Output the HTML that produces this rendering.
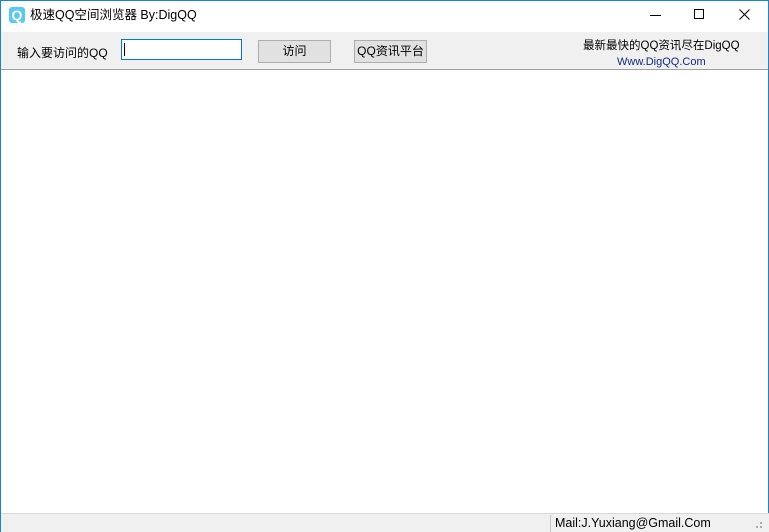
<!DOCTYPE html>
<html><head><meta charset="utf-8"><style>
*{margin:0;padding:0;box-sizing:border-box}
body{width:769px;height:532px;overflow:hidden;background:#fff;font-family:"Liberation Sans","Noto Sans CJK SC",sans-serif;font-size:12px;color:#000;position:relative}
.frame{position:absolute;left:0;top:0;width:769px;height:532px;border:1px solid #1883d7;border-bottom:none}
.abs{position:absolute;white-space:nowrap}
</style></head><body>
<div class="frame"></div>
<div class="abs" style="left:9px;top:7px;width:16px;height:16px;background:#5ac8f5;border-radius:3px;color:#fff;font-weight:bold;font-size:14px;line-height:16px;text-align:center">Q</div>
<div class="abs" style="left:30px;top:7px;font-size:12.5px;line-height:16px">极速QQ空间浏览器 By:DigQQ</div>
<div class="abs" style="left:650px;top:15px;width:11px;height:1px;background:#000"></div>
<div class="abs" style="left:694px;top:9px;width:10px;height:10px;border:1px solid #000"></div>
<svg class="abs" style="left:739px;top:9px" width="11" height="11"><path d="M0.5 0.5L10.5 10.5M10.5 0.5L0.5 10.5" stroke="#000" stroke-width="1"/></svg>
<div class="abs" style="left:1px;top:32px;width:767px;height:38px;background:#f0f0f0;border-bottom:1px solid #a0a0a0"></div>
<div class="abs" style="left:17px;top:46px;line-height:14px">输入要访问的QQ</div>
<div class="abs" style="left:121px;top:39px;width:121px;height:21px;background:#fff;border:1px solid #0078d7"></div>
<div class="abs" style="left:124px;top:43px;width:1px;height:13px;background:#000"></div>
<div class="abs" style="left:258px;top:40px;width:73px;height:23px;background:#e1e1e1;border:1px solid #adadad;text-align:center;line-height:21px">访问</div>
<div class="abs" style="left:354px;top:40px;width:73px;height:23px;background:#e1e1e1;border:1px solid #adadad;text-align:center;line-height:21px">QQ资讯平台</div>
<div class="abs" style="left:583px;top:39px;line-height:14px;font-size:11.5px">最新最快的QQ资讯尽在DigQQ</div>
<div class="abs" style="left:617px;top:55px;line-height:14px;font-size:11px;color:#102a80">Www.DigQQ.Com</div>
<div class="abs" style="left:1px;top:513px;width:768px;height:19px;background:#f0f0f0;border-top:1px solid #d7d7d7"></div>
<div class="abs" style="left:550px;top:515px;width:1px;height:17px;background:#c8c8c8"></div>
<div class="abs" style="left:555px;top:515px;font-size:12.5px;line-height:16px">Mail:J.Yuxiang@Gmail.Com</div>
<div class="abs" style="left:756px;top:526px;width:2px;height:2px;background:#aaa"></div>
<div class="abs" style="left:760px;top:526px;width:2px;height:2px;background:#aaa"></div>
<div class="abs" style="left:760px;top:522px;width:2px;height:2px;background:#aaa"></div>
</body></html>
